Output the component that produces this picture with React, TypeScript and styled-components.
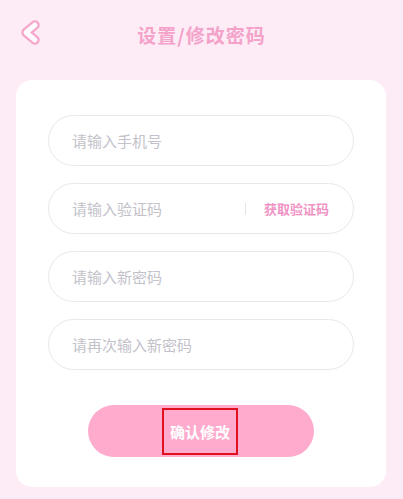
import * as React from 'react';
import styled, { createGlobalStyle } from 'styled-components';

const GlobalStyle = createGlobalStyle`
  html, body {
    margin: 0;
    padding: 0;
    background: #fdebf6;
  }
  body {
    font-family: "Noto Sans CJK SC", "Noto Sans", sans-serif;
  }
  * {
    box-sizing: border-box;
  }
`;

const Page = styled.div`
  min-height: 499px;
  background: #fdebf6;
  padding-bottom: 12px;
`;

const Header = styled.div`
  position: relative;
  height: 68px;
  display: flex;
  align-items: center;
  justify-content: center;
`;

const BackButton = styled.button`
  position: absolute;
  left: 14px;
  top: 16px;
  width: 30px;
  height: 34px;
  padding: 0;
  border: 0;
  background: none;
  display: flex;
`;

const Title = styled.h1`
  margin: 0;
  font-size: 19px;
  font-weight: 700;
  color: #f4a2c9;
  letter-spacing: 1px;
`;

const Card = styled.div`
  margin: 12px 17px 0 16px;
  background: #ffffff;
  border-radius: 16px;
  padding: 35px 32px 30px;
  display: flex;
  flex-direction: column;
`;

const Fields = styled.div`
  display: flex;
  flex-direction: column;
  gap: 17px;
`;

const Field = styled.div`
  height: 51px;
  border: 1px solid #e9e7ee;
  border-radius: 26px;
  display: flex;
  align-items: center;
  padding: 0 24px 0 20px;
`;

const Input = styled.input`
  flex: 1;
  min-width: 0;
  border: 0;
  outline: none;
  background: transparent;
  font-family: inherit;
  font-size: 15px;
  color: #333;
  padding: 0 0 0 3px;
  &::placeholder {
    color: #c3c2ca;
  }
`;

const Divider = styled.span`
  width: 1px;
  height: 12px;
  background: #e4e3ea;
  margin-right: 18px;
`;

const CodeLink = styled.span`
  font-size: 13px;
  font-weight: 700;
  color: #f093c4;
  white-space: nowrap;
`;

const Submit = styled.button`
  align-self: center;
  margin-top: 35px;
  width: 226px;
  height: 52px;
  border: 0;
  border-radius: 26px;
  background: #feabcd;
  display: flex;
  align-items: center;
  justify-content: center;
  font-family: inherit;
  padding: 0;
`;

const SubmitLabel = styled.span`
  width: 76px;
  height: 47px;
  border: 2px solid #e0101e;
  display: flex;
  align-items: center;
  justify-content: center;
  font-size: 15px;
  font-weight: 700;
  color: #ffffff;
  margin-left: -2px;
`;

function BackIcon() {
  const d = 'M21 9 L12 16.5 L21 24';
  return (
    <svg width="30" height="34" viewBox="0 0 30 34">
      <path d={d} fill="none" stroke="#f5a6cb" strokeWidth="9.5" strokeLinecap="round" strokeLinejoin="round" />
      <path d={d} fill="none" stroke="#fffafd" strokeWidth="5" strokeLinecap="round" strokeLinejoin="round" />
    </svg>
  );
}

export default function App() {
  return (
    <Page>
      <GlobalStyle />
      <Header>
        <BackButton aria-label="返回">
          <BackIcon />
        </BackButton>
        <Title>设置/修改密码</Title>
      </Header>
      <Card>
        <Fields>
          <Field>
            <Input placeholder="请输入手机号" />
          </Field>
          <Field>
            <Input placeholder="请输入验证码" />
            <Divider />
            <CodeLink>获取验证码</CodeLink>
          </Field>
          <Field>
            <Input type="password" placeholder="请输入新密码" />
          </Field>
          <Field>
            <Input type="password" placeholder="请再次输入新密码" />
          </Field>
        </Fields>
        <Submit>
          <SubmitLabel>确认修改</SubmitLabel>
        </Submit>
      </Card>
    </Page>
  );
}
